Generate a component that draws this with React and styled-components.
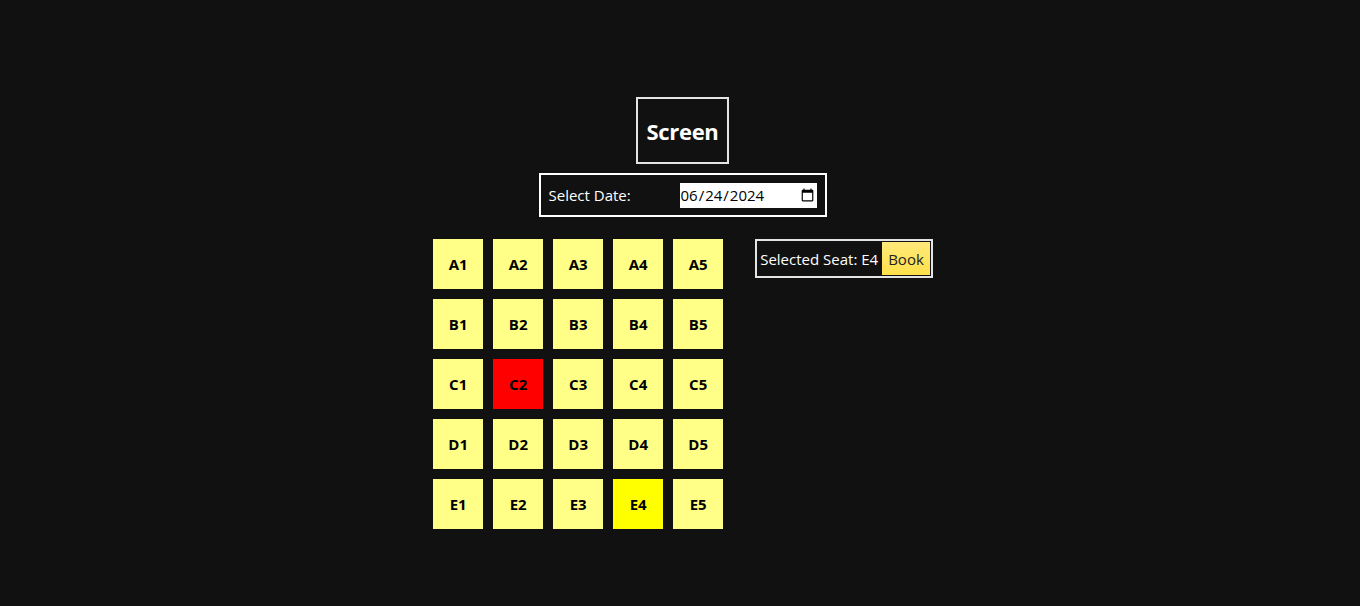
import React, { useState } from "react";
import styled, { createGlobalStyle } from "styled-components";

const Global = createGlobalStyle`
  html, body {
    margin: 0;
    background: #111111;
    color: #ffffff;
    font-family: "Open Sans", "Noto Sans", sans-serif;
  }
`;

const Page = styled.div`
  display: flex;
  flex-direction: column;
  align-items: center;
  padding: 97px 0 0 5px;
  min-height: 606px;
  box-sizing: border-box;
`;

const ScreenBox = styled.div`
  width: 93px;
  height: 67px;
  box-sizing: border-box;
  border: 2px solid #e4e4e4;
  display: flex;
  align-items: center;
  justify-content: center;
  font-size: 22px;
  font-weight: 700;
  letter-spacing: -0.3px;
`;

const DateBox = styled.div`
  margin-top: 9px;
  width: 288px;
  height: 44px;
  box-sizing: border-box;
  border: 2px solid #ffffff;
  display: flex;
  align-items: center;
  padding: 0 8px;
`;

const Label = styled.label`
  width: 131px;
  font-size: 15px;
`;

const DateInput = styled.input`
  width: 137px;
  height: 25px;
  box-sizing: border-box;
  border: none;
  padding: 0;
  background: #ffffff;
  color: #000000;
  font-family: "Open Sans", "Noto Sans", sans-serif;
  font-size: 15px;
`;

const Hall = styled.div`
  margin-top: 22px;
  display: flex;
  align-items: flex-start;
  gap: 32px;
  margin-left: 1px;
`;

const Grid = styled.div`
  display: grid;
  grid-template-columns: repeat(5, 50px);
  grid-auto-rows: 50px;
  gap: 10px;
`;

const Seat = styled.div`
  background: ${p => (p.$booked ? "#ff0000" : p.$selected ? "#ffff00" : "#ffff88")};
  color: #000000;
  display: flex;
  align-items: center;
  justify-content: center;
  font-size: 15px;
  font-weight: 700;
  cursor: pointer;
`;

const Summary = styled.div`
  height: 39px;
  box-sizing: border-box;
  border: 2px solid #e4e4e4;
  display: flex;
  align-items: stretch;
`;

const SummaryText = styled.span`
  display: flex;
  align-items: center;
  padding: 0 3px 0 3px;
  font-size: 15px;
`;

const BookButton = styled.button`
  border: none;
  margin: 1px;
  padding: 0 6px;
  background: linear-gradient(180deg, #ffe97a 0%, #ffe04a 100%);
  color: #222222;
  font-family: "Open Sans", "Noto Sans", sans-serif;
  font-size: 15px;
  cursor: pointer;
`;

const rows = ["A", "B", "C", "D", "E"];
const booked = ["C2"];

export default function App() {
  const [selected, setSelected] = useState("E4");
  const [date, setDate] = useState("2024-06-24");

  return (
    <Page>
      <Global />
      <ScreenBox>Screen</ScreenBox>
      <DateBox>
        <Label>Select Date:</Label>
        <DateInput type="date" value={date} onChange={e => setDate(e.target.value)} />
      </DateBox>
      <Hall>
        <Grid>
          {rows.map(r =>
            [1, 2, 3, 4, 5].map(n => {
              const id = r + n;
              return (
                <Seat
                  key={id}
                  $booked={booked.includes(id)}
                  $selected={selected === id}
                  onClick={() => !booked.includes(id) && setSelected(id)}
                >
                  {id}
                </Seat>
              );
            })
          )}
        </Grid>
        <Summary>
          <SummaryText>Selected Seat: {selected}</SummaryText>
          <BookButton>Book</BookButton>
        </Summary>
      </Hall>
    </Page>
  );
}
